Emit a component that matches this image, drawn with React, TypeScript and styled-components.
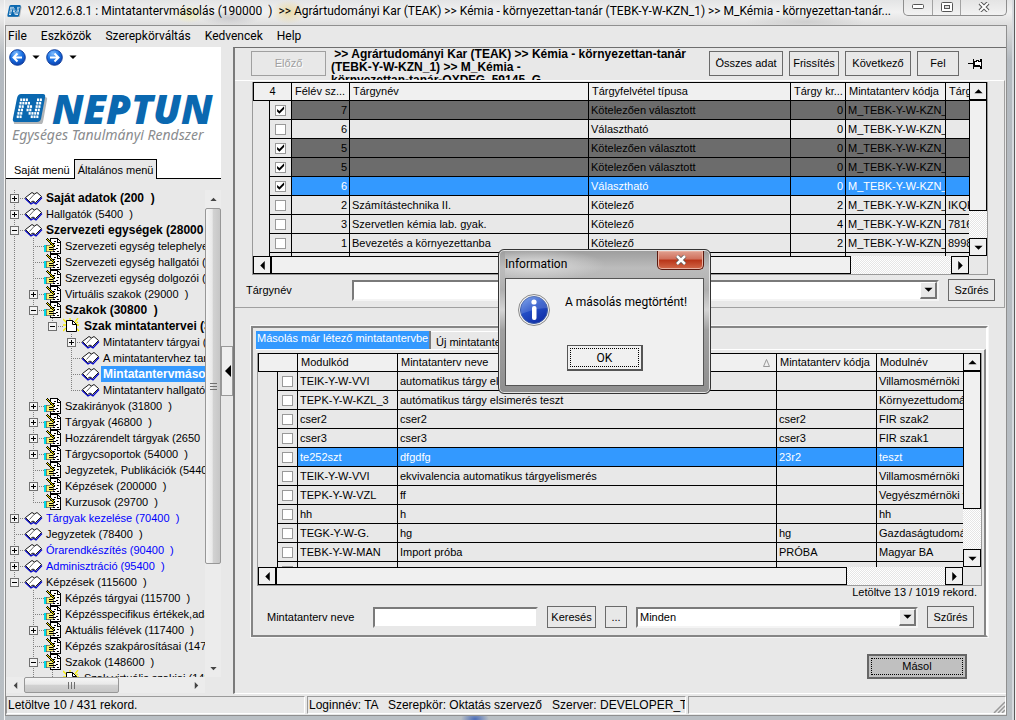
import React from "react";
import styled, { createGlobalStyle, css } from "styled-components";

const ui = `"Liberation Sans", Arial, sans-serif`;
const chrome = `Roboto, "Liberation Sans", sans-serif`;
const brand = `"Open Sans", "Noto Sans", sans-serif`;
const face = "#e8e8e8";
const blue = "#3399ff";

const Global = createGlobalStyle`
  *, *::before, *::after { box-sizing: border-box; }
  body { margin: 0; font: 11px/13px ${ui}; color: #000; }
  button, input, select { font: inherit; color: inherit; margin: 0; border-radius: 0; }
  svg { flex: none; }
`;

/* ---------- window frame ---------- */

const Frame = styled.div`
  position: relative;
  display: flex;
  flex-direction: column;
  min-height: 100vh;
  padding: 0 9px 4px 5px;
  overflow: hidden;
  background:
    linear-gradient(90deg, transparent 0 4px, #f4f4f4 4px 5px, transparent 5px),
    linear-gradient(270deg, #f0f0f0 0 1px, #5c5c5c 1px 2px, #d6dade 2px 4px, transparent 4px),
    radial-gradient(ellipse 14px 8px at 475px 719px, #4a6cb8, transparent),
    linear-gradient(180deg, #e3e4e5 0, #f1f1f1 12px, #dcdcdc 26px, #b4bac0 60px, #b9bfc4 100%);
`;

const TitleBar = styled.header`
  display: flex;
  align-items: center;
  gap: 6px;
  height: 25px;
  padding: 0 0 3px 2px;
  background:
    radial-gradient(ellipse 16px 9px at 184px 14px, #efeab0, transparent),
    radial-gradient(ellipse 18px 12px at 284px 12px, #ead9a4, transparent),
    radial-gradient(ellipse 30px 8px at 225px 18px, #c9c9cc, transparent),
    radial-gradient(ellipse 60px 8px at 800px 22px, #cfcfcf, transparent);
`;

const Title = styled.h1`
  flex: 1;
  min-width: 0;
  margin: 0;
  overflow: hidden;
  white-space: pre;
  text-overflow: ellipsis;
  font: 400 12px/16px ${chrome};
`;

const Caption = styled.div`
  display: flex;
  align-self: flex-start;
  border: 1px solid #8e8e8e;
  border-top: 0;
  border-radius: 0 0 5px 5px;
  background: linear-gradient(#e4e4e4, #f2f2f2);
`;

const CaptionButton = styled.button<{ $w: number }>`
  display: grid;
  place-items: center;
  width: ${(p) => p.$w}px;
  height: 15px;
  padding: 0 0 2px;
  border: 0;
  background: none;
  & + & { border-left: 1px solid #a2a2a2; }
`;

const Client = styled.div`
  flex: 1;
  display: flex;
  flex-direction: column;
  border: 1px solid #8f8f8f;
  background: ${face};
`;

const MenuBar = styled.nav`
  display: flex;
  gap: 14px;
  height: 21px;
  padding: 1px 2px 0;
  font: 12px/18px ${chrome};
`;

const MenuItem = styled.a`
  color: inherit;
  text-decoration: none;
`;

const Main = styled.div`
  flex: 1;
  display: flex;
`;

/* ---------- left side ---------- */

const Side = styled.aside`
  display: flex;
  flex-direction: column;
  width: 215px;
  flex: none;
`;

const Brand = styled.div`
  height: 112px;
  padding: 1px 3px 0;
  background: #fff;
`;

const NavRow = styled.div`
  display: flex;
  align-items: center;
  gap: 6px;
  height: 18px;
`;

const RoundButton = styled.button`
  display: flex;
  padding: 0;
  border: 0;
  background: none;
`;

const LogoRow = styled.div`
  display: flex;
  align-items: center;
  gap: 4px;
  height: 36px;
  padding: 0 3px;
  margin-top: 25px;
`;

const LogoText = styled.span`
  font: italic 800 40px/36px ${brand};
  color: #0a68b0;
`;

const Slogan = styled.p`
  margin: 0 0 0 3px;
  font: italic 14px/16px "Noto Sans", sans-serif;
  color: #8a8c8e;
  white-space: nowrap;
`;

const SideTabs = styled.div`
  display: flex;
  height: 20px;
  background: #fff;
  border-bottom: 1px solid #000;
`;

const SideTab = styled.button<{ $on?: boolean }>`
  height: 20px;
  padding: 2px 3px 0;
  border: 1px solid transparent;
  border-bottom: 0;
  background: none;
  white-space: nowrap;
  &:first-child { margin-left: 4px; }
  ${(p) => p.$on && css`
    border-color: #000;
    background: ${face};
  `}
`;

const TreeArea = styled.div`
  flex: 1;
  display: grid;
  grid-template-columns: minmax(0, 1fr) 16px;
  grid-template-rows: 487px 16px;
  padding-top: 11px;
`;

const TreeList = styled.ul`
  margin: 0;
  padding: 0;
  overflow: hidden;
  list-style: none;
`;

const TreeRow = styled.li`
  display: flex;
  height: 16px;
  white-space: pre;
`;

const Node = styled.span<{ $bold?: boolean; $link?: boolean; $sel?: boolean }>`
  flex: 1 0 auto;
  padding-left: 2px;
  font-size: ${(p) => (p.$bold ? 12 : 11)}px;
  line-height: 16px;
  font-weight: ${(p) => (p.$bold ? 700 : 400)};
  color: ${(p) => (p.$sel ? "#fff" : p.$link ? "#0000ff" : "#000")};
  background: ${(p) => (p.$sel ? blue : "none")};
`;

const SoftBar = styled.div<{ $h?: boolean }>`
  display: flex;
  flex-direction: ${(p) => (p.$h ? "row" : "column")};
  align-items: stretch;
  background: #ececec;
`;

const SoftThumb = styled.div<{ $size: number; $h?: boolean }>`
  display: grid;
  place-items: center;
  flex: 0 0 ${(p) => p.$size}px;
  border: 1px solid #979797;
  border-radius: 2px;
  background: linear-gradient(${(p) => (p.$h ? "180deg" : "90deg")}, #f5f5f5, #e9e9e9 45%, #d2d2d2 50%, #c6c6c6);
`;

const SoftEnd = styled.div<{ $push?: "right" | "down" }>`
  display: grid;
  place-items: center;
  flex: 0 0 18px;
  margin-left: ${(p) => (p.$push === "right" ? "auto" : 0)};
  margin-top: ${(p) => (p.$push === "down" ? "auto" : 0)};
`;

const Splitter = styled.div`
  display: flex;
  flex: 0 0 12px;
  align-items: center;
`;

const SplitButton = styled.button`
  display: grid;
  place-items: center;
  width: 12px;
  height: 50px;
  padding: 0;
  border: 1px solid #999;
  background: #efefef;
`;

/* ---------- right side ---------- */

const Content = styled.main`
  flex: 1;
  min-width: 0;
  border-top: 1px solid #6e6e6e;
  border-left: 2px solid #7a7a7a;
  border-bottom: 1px solid #fff;
`;

const HeadBar = styled.div`
  display: flex;
  align-items: flex-start;
  gap: 6px;
  height: 32px;
  padding: 3px 21px 0 16px;
`;

const Crumb = styled.p`
  flex: 1;
  min-width: 0;
  height: 32px;
  margin: -3px 15px 0 -1px;
  overflow: hidden;
  white-space: pre;
  font: 700 12px/13px ${ui};
`;

const Button = styled.button<{ $w: number; $h?: number }>`
  flex: none;
  width: ${(p) => p.$w}px;
  height: ${(p) => p.$h ?? 22}px;
  padding: 0;
  border: 1px solid #6a6a6a;
  background: ${face};
  white-space: nowrap;
  &:disabled { color: #a0a0a0; border-color: #a0a0a0; text-shadow: 1px 1px #fff; }
`;

const PinButton = styled.button`
  display: grid;
  place-items: center;
  width: 20px;
  height: 25px;
  padding: 0;
  border: 0;
  background: none;
`;

const UpperPanel = styled.section`
  margin-right: 1px;
  padding: 1px 9px 6px 11px;
  border-top: 1px solid #fff;
  border-right: 1px solid #a0a0a0;
  border-bottom: 1px solid #a0a0a0;
`;

const UpperInset = styled.div`
  padding: 0 7px 0 6px;
`;

const GridBox = styled.div<{ $rows: number }>`
  display: grid;
  grid-template-columns: minmax(0, 1fr) 18px;
  grid-template-rows: ${(p) => p.$rows}px 18px;
  border: 1px solid #9a9a9a;
  border-top: 0;
`;

const TableWrap = styled.div`
  overflow: hidden;
`;

const Table = styled.table`
  width: 100%;
  table-layout: fixed;
  border-collapse: separate;
  border-spacing: 0;
`;

const Th = styled.th`
  position: relative;
  height: 19px;
  padding: 0 3px;
  overflow: hidden;
  border: solid #000;
  border-width: 1px 1px 1px 0;
  background: #f0f0f0;
  font-weight: 400;
  text-align: left;
  white-space: nowrap;
  &:first-child { border-left-width: 1px; text-align: center; }
  &:last-child { border-right: 0; }
`;

const Td = styled.td<{ $num?: boolean }>`
  height: 19px;
  padding: 0 2px;
  overflow: hidden;
  border: solid #000;
  border-width: 0 1px 1px 0;
  text-align: ${(p) => (p.$num ? "right" : "left")};
  white-space: nowrap;
  &:last-child { border-right: 0; }
`;

const Gutter = styled.td`
  padding: 0;
  border-right: 1px solid #000;
`;

const CheckCell = styled.td`
  padding: 0;
  border: solid #000;
  border-width: 0 1px 1px 0;
  text-align: center;
  line-height: 0;
`;

const Row = styled.tr<{ $tone?: "dark" | "sel" }>`
  ${Td} {
    background: ${(p) => (p.$tone === "dark" ? "#6c6c6c" : p.$tone === "sel" ? blue : "none")};
    color: ${(p) => (p.$tone === "sel" ? "#fff" : "#000")};
  }
`;

const Check = styled.input.attrs({ type: "checkbox" })`
  appearance: none;
  width: 11px;
  height: 11px;
  vertical-align: top;
  border: 1px solid #999;
  background: #fff;
  &:checked::before {
    content: "";
    display: block;
    width: 9px;
    height: 9px;
    background: #000;
    clip-path: polygon(12% 38%, 38% 60%, 90% 8%, 90% 38%, 38% 92%, 12% 68%);
  }
`;

const SortMark = styled.span`
  position: absolute;
  right: 6px;
  top: 5px;
  display: flex;
`;

const ClassicBar = styled.div<{ $h?: boolean }>`
  display: flex;
  flex-direction: ${(p) => (p.$h ? "row" : "column")};
  background: repeating-conic-gradient(#fff 0 25%, #e6e6e6 0 50%) 0 0 / 2px 2px;
`;

const ClassicEnd = styled.button`
  display: grid;
  place-items: center;
  flex: 0 0 18px;
  padding: 0;
  border: 1px solid #000;
  background: #f0f0f0;
`;

const ClassicThumb = styled.div<{ $size: string; $h?: boolean }>`
  flex: 0 0 ${(p) => p.$size};
  border: 1px solid #000;
  margin-right: ${(p) => (p.$h ? "auto" : 0)};
  margin-bottom: ${(p) => (p.$h ? 0 : "auto")};
  background: #f0f0f0;
`;

const Field = styled.div<{ $top: number; $pad: string }>`
  display: flex;
  align-items: center;
  gap: 9px;
  margin-top: ${(p) => p.$top}px;
  padding: ${(p) => p.$pad};
`;

const Label = styled.label`
  width: 97px;
  flex: none;
`;

const TextBox = styled.input`
  width: 165px;
  height: 21px;
  padding: 0 3px;
  border: 2px solid;
  border-color: #7a7a7a #e8e8e8 #e8e8e8 #7a7a7a;
  background: #fff;
`;

const Combo = styled.div`
  position: relative;
  flex: 1;
  height: 21px;
`;

const Select = styled.select`
  appearance: none;
  width: 100%;
  height: 21px;
  padding: 0 20px 0 2px;
  border: 2px solid;
  border-color: #7a7a7a #f4f4f4 #f4f4f4 #7a7a7a;
  background: #fff;
`;

const ComboArrow = styled.span`
  position: absolute;
  top: 2px;
  right: 2px;
  display: grid;
  place-items: center;
  width: 17px;
  height: 17px;
  border: solid;
  border-width: 1px 2px 2px 1px;
  border-color: #fff #777 #777 #fff;
  background: ${face};
  pointer-events: none;
`;

const Group = styled.section`
  margin: 18px 18px 0 16px;
  height: 311px;
  padding: 3px 0 0 3px;
  border: 2px solid;
  border-color: #858585 #fff #858585 #858585;
  outline: 1px solid #f6f6f6;
`;

const Tabs = styled.div`
  display: flex;
  height: 18px;
`;

const Tab = styled.button<{ $on?: boolean }>`
  width: 175px;
  padding: 0 0 3px 1px;
  border: 0;
  border-right: 2px solid #7c7c7c;
  background: ${(p) => (p.$on ? blue : face)};
  color: ${(p) => (p.$on ? "#fff" : "#000")};
  text-align: left;
  white-space: nowrap;
  & + & { padding: 3px 0 0 5px; border-top: 1px solid #fff; }
`;

const Page = styled.div`
  height: 286px;
  padding: 3px 2px 0 1px;
  border-top: 1px solid #fff;
  border-right: 2px solid #858585;
`;

const Count = styled.p`
  margin: 0 5px 0 0;
  text-align: right;
`;

const Submit = styled.button`
  display: grid;
  width: 100px;
  height: 25px;
  margin: 17px 39px 0 auto;
  padding: 2px;
  border: 2px solid #666;
  background: #c0c0c0;
`;

const Focus = styled.span`
  display: grid;
  place-items: center;
  border: 1px dotted #000;
`;

const StatusBar = styled.footer`
  display: grid;
  grid-template-columns: 299px 379px minmax(0, 1fr);
  gap: 2px;
  padding: 2px 0 1px;
`;

const StatusCell = styled.div`
  display: flex;
  align-items: flex-end;
  justify-content: space-between;
  height: 18px;
  padding-left: 1px;
  overflow: hidden;
  border: solid;
  border-width: 1px;
  border-color: #9a9a9a #fff #fff #9a9a9a;
  font: 12px/16px ${ui};
  white-space: pre;
`;

/* ---------- message box ---------- */

const Dialog = styled.div`
  position: absolute;
  left: 498px;
  top: 249px;
  width: 213px;
  padding: 0 6px 7px;
  border: 1px solid #333;
  border-radius: 6px;
  background: linear-gradient(180deg, #9c9c9c, #bcbcbc 18px, #b0b0b0 40px, #d4d4d4 60px, #a0a0a0 80px, #8f8f8f);
  box-shadow: inset 0 0 0 1px #e4e4e4;
  font: 12px/16px ${chrome};
`;

const DialogHead = styled.div`
  display: flex;
  justify-content: space-between;
  height: 28px;
  background: radial-gradient(ellipse 70px 16px at 30px 15px, #dcdcdc, transparent);
`;

const DialogTitle = styled.h2`
  margin: 6px 0 0;
  font: inherit;
`;

const DialogClose = styled.button`
  display: grid;
  place-items: center;
  width: 47px;
  height: 19px;
  margin-top: 1px;
  padding: 0;
  border: 1px solid #5a1a10;
  border-top: 0;
  border-radius: 0 0 5px 5px;
  background: linear-gradient(#e0a090, #d0705c 45%, #b83418 50%, #d2694a);
  box-shadow: inset 0 0 0 1px #e8b0a0;
`;

const DialogBody = styled.div`
  display: grid;
  grid-template-columns: 32px 1fr;
  column-gap: 15px;
  padding: 15px 12px 14px;
  border: 1px solid #555;
  background: #f0f0f0;
`;

const Message = styled.p`
  margin: 0;
  white-space: nowrap;
`;

const OkButton = styled.button`
  display: grid;
  grid-column: 1 / -1;
  width: 76px;
  height: 26px;
  margin: 19px 0 0 49px;
  padding: 2px;
  border: 1px solid #555;
  border-right-width: 2px;
  border-bottom-width: 2px;
  background: #f0f0f0;
`;

/* ---------- drawings ---------- */

type Dir = "up" | "down" | "left" | "right";
const arrowPath: Record<Dir, string> = {
  up: "M0 6L4.500 1.500L9 6Z",
  down: "M0 2H9L4.500 6.500Z",
  left: "M2 4L7 -1V9Z",
  right: "M7 4L2 -1V9Z",
};
const Arrow = ({ dir, size = 9, fill = "#000" }: { dir: Dir; size?: number; fill?: string }) => (
  <svg width={size} height={size} viewBox="0 -1 9 10" fill={fill} aria-hidden>
    <path d={arrowPath[dir]} />
  </svg>
);

// lit cells of the dotted mark on the blue tile
const cells = ["111...11", "1111..11", "11.11.11", "11.11.11", "11..1111", "11...111"];
const NeptunMark = ({ size }: { size: number }) => (
  <svg width={size} height={size * 0.86} viewBox="0 0 36 31" aria-hidden>
    <path d="M10 3H33Q36 3 35 6L31 28Q30 31 27 31H5Q1 31 2 27L6 6Q7 3 10 3Z" fill="#b3b6b8" />
    <path d="M9 0H31Q34 0 33 4L29 25Q28 28 25 28H3Q0 28 1 24L5 4Q6 0 9 0Z" fill="#0a68b0" />
    {cells.flatMap((line, r) =>
      [...line].map((c, k) =>
        c === "1" ? (
          <rect key={`${r}-${k}`} x={8.2 - r * 0.7 + k * 2.8} y={4.5 + r * 3.4} width="2.100" height="2.600" fill="#fff" />
        ) : null
      )
    )}
  </svg>
);

const Globe = ({ back, id }: { back?: boolean; id: string }) => (
  <svg width="17" height="17" viewBox="0 0 17 17" aria-hidden>
    <defs>
      <radialGradient id={id} cx="0.4" cy="0.25" r="0.8">
        <stop offset="0" stopColor="#7fbcff" />
        <stop offset="0.5" stopColor="#1a72e4" />
        <stop offset="1" stopColor="#0a3aa8" />
      </radialGradient>
    </defs>
    <circle cx="8.500" cy="8.500" r="7.800" fill={`url(#${id})`} stroke="#123f9c" />
    <path
      d={back ? "M13 8.500H5M8.500 4.500L4.500 8.500L8.500 12.500" : "M4 8.500H12M8.500 4.500L12.500 8.500L8.500 12.500"}
      fill="none" stroke="#fff" strokeWidth="2"
    />
  </svg>
);

const Book = () => (
  <svg width="19" height="16" viewBox="0 0 19 16" aria-hidden>
    <path d="M0 8.500L6 14L8.500 12.500L11 14L17 7.500" fill="none" stroke="#0000c8" strokeWidth="1.200" />
    <path d="M0.500 7.500L7 2.500L9.500 4L12 2.500L16.500 6.500L10.500 12.500L8 11L5.500 12.500Z" fill="#fff" stroke="#000" strokeWidth="0.900" />
    <path d="M9.500 4L4.500 9.500" stroke="#222" strokeWidth="0.700" />
  </svg>
);

const Notes = () => (
  <svg width="19" height="16" viewBox="0 0 19 16" aria-hidden shapeRendering="crispEdges">
    <path d="M6.500 0.500H13.500L16.500 3.500V15.500H6.500Z" fill="#fff" stroke="#000" />
    <path d="M13 1V4H16" fill="none" stroke="#000" />
    <path d="M9 5H11M13 7H15M12 10H14M9 13H11M13 13H15M10 3H12" stroke="#000" />
    <path d="M2 7H6L8 6L10 8L9 13H4L2 14Z" fill="#f8f070" stroke="#555" strokeWidth="0.700" />
    <path d="M0 7H2V14H0Z" fill="#00d8e8" />
    <path d="M3 1L11 9" stroke="#000" strokeWidth="2" />
    <path d="M3 1L10 8" stroke="#f8e800" strokeWidth="1" />
    <path d="M5 9H9M5 11H12" stroke="#000" />
  </svg>
);

const NewPage = () => (
  <svg width="19" height="16" viewBox="0 0 19 16" aria-hidden>
    <path d="M0 1L4 5M15 0L12 4M0 13L3 10M13 10L16 13M7 0V2M0 7H3M13 7H16M15 4L12 6" stroke="#f8f000" strokeWidth="1.300" />
    <path d="M3.500 2.500H9.500L13.500 6.500V13.500H3.500Z" fill="#fff" stroke="#000" />
    <path d="M9.500 2.500V6.500H13.500" fill="none" stroke="#000" />
  </svg>
);

const Guide = ({ kind, box }: { kind: "pass" | "tee" | "end" | "gap"; box?: "+" | "-" }) => (
  <svg width="19" height="16" viewBox="0 0 19 16" aria-hidden shapeRendering="crispEdges">
    {kind !== "gap" && (
      <path d={kind === "end" ? "M8.500 0V8" : "M8.500 0V16"} stroke="#808080" strokeDasharray="1 1" />
    )}
    {(kind === "tee" || kind === "end") && <path d="M8 8.500H19" stroke="#808080" strokeDasharray="1 1" />}
    {box && (
      <>
        <rect x="4.500" y="4.500" width="8" height="8" fill="#f4f4f4" stroke="#707070" />
        <path d={box === "+" ? "M6 8.500H11M8.500 6V11" : "M6 8.500H11"} stroke="#000" />
      </>
    )}
  </svg>
);

const Grip = ({ h }: { h?: boolean }) => (
  <svg width="9" height="9" viewBox="0 0 9 9" aria-hidden shapeRendering="crispEdges">
    <path d={h ? "M1.500 1V8M4.500 1V8M7.500 1V8" : "M1 1.500H8M1 4.500H8M1 7.500H8"} stroke="#707070" />
  </svg>
);

const Pin = () => (
  <svg width="15" height="12" viewBox="0 0 15 12" aria-hidden shapeRendering="crispEdges">
    <path d="M0 5.500H5M5.500 1V11" stroke="#000" />
    <path d="M6 3.500H8V2.500H10V3.500H12V1.500H13.500V10.500H12V8.500H6Z" fill="#fff" stroke="#000" />
    <path d="M6 7.500H12" stroke="#000" strokeWidth="2" />
  </svg>
);

const InfoIcon = () => (
  <svg width="32" height="32" viewBox="0 0 32 32" aria-hidden>
    <defs>
      <linearGradient id="info" x1="0" y1="0" x2="0.6" y2="1">
        <stop offset="0" stopColor="#6f9bea" />
        <stop offset="0.5" stopColor="#2450c8" />
        <stop offset="1" stopColor="#1230a8" />
      </linearGradient>
    </defs>
    <circle cx="16" cy="16" r="15.500" fill="#f2f2f2" stroke="#8a8a8a" />
    <circle cx="16" cy="16" r="13.500" fill="url(#info)" stroke="#3a5aa8" />
    <path d="M3 16A13 13 0 0 1 29 14Q18 14 3 20Z" fill="#fff" opacity="0.15" />
    <circle cx="16" cy="8" r="2.600" fill="#fff" />
    <rect x="14" y="12" width="4.500" height="14" rx="2" fill="#fff" />
  </svg>
);

/* ---------- data ---------- */

type Icon = "book" | "notes" | "page";
type TreeItem = [guides: string, box: "" | "+" | "-", icon: Icon, text: string, flag?: "bold" | "link" | "sel"];

// guides: "|" passing line, "t" branch, "l" last branch, "." empty
const tree: TreeItem[] = [
  ["t", "+", "book", "Saját adatok (200  )", "bold"],
  ["t", "+", "book", "Hallgatók (5400  )"],
  ["t", "-", "book", "Szervezeti egységek (28000  )", "bold"],
  ["|t", "", "notes", "Szervezeti egység telephelyei"],
  ["|t", "", "notes", "Szervezeti egység hallgatói (28200  )"],
  ["|t", "", "notes", "Szervezeti egység dolgozói (28400  )"],
  ["|t", "+", "notes", "Virtuális szakok (29000  )"],
  ["|t", "-", "notes", "Szakok (30800  )", "bold"],
  ["||l", "-", "page", "Szak mintatantervei (31000  )", "bold"],
  ["||.t", "+", "book", "Mintatanterv tárgyai (31200  )"],
  ["||.t", "", "book", "A mintatantervhez tartozó"],
  ["||.t", "", "book", "Mintatantervmásolás", "sel"],
  ["||.l", "", "book", "Mintatanterv hallgatói"],
  ["|t", "+", "notes", "Szakirányok (31800  )"],
  ["|t", "+", "notes", "Tárgyak (46800  )"],
  ["|t", "+", "notes", "Hozzárendelt tárgyak (2650  )"],
  ["|t", "+", "notes", "Tárgycsoportok (54000  )"],
  ["|t", "", "notes", "Jegyzetek, Publikációk (54400  )"],
  ["|t", "+", "notes", "Képzések (200000  )"],
  ["|l", "", "notes", "Kurzusok (29700  )"],
  ["t", "+", "book", "Tárgyak kezelése (70400  )", "link"],
  ["t", "", "book", "Jegyzetek (78400  )"],
  ["t", "+", "book", "Órarendkészítés (90400  )", "link"],
  ["t", "+", "book", "Adminisztráció (95400  )", "link"],
  ["l", "-", "book", "Képzések (115600  )"],
  [".t", "", "notes", "Képzés tárgyai (115700  )"],
  [".t", "", "notes", "Képzésspecifikus értékek,adatok"],
  [".t", "+", "notes", "Aktuális félévek (117400  )"],
  [".t", "", "notes", "Képzés szakpárosításai (147100  )"],
  [".t", "-", "notes", "Szakok (148600  )"],
  [".|t", "", "page", "Szak virtuális szakjai (148800  )"],
];

const guideKind = { "|": "pass", t: "tee", l: "end", ".": "gap" } as const;
const icons = { book: Book, notes: Notes, page: NewPage };

const subjects: [boolean, "dark" | "sel" | undefined, ...string[]][] = [
  [true, "dark", "7", "", "Kötelezően választott", "0", ""],
  [false, undefined, "6", "", "Választható", "0", ""],
  [true, "dark", "5", "", "Kötelezően választott", "0", ""],
  [true, "dark", "5", "", "Kötelezően választott", "0", ""],
  [true, "sel", "6", "", "Választható", "0", ""],
  [false, undefined, "2", "Számítástechnika II.", "Kötelező", "2", "IKQK"],
  [false, undefined, "3", "Szervetlen kémia lab. gyak.", "Kötelező", "4", "7816"],
  [false, undefined, "1", "Bevezetés a környezettanba", "Kötelező", "2", "8998"],
  [false, undefined, "", "", "", "", ""],
];

const plans: string[][] = [
  ["TEIK-Y-W-VVI", "automatikus tárgy elismerés", "", "Villamosmérnöki"],
  ["TEPK-Y-W-KZL_3", "autómatikus tárgy elsimerés teszt", "", "Környezettudományi"],
  ["cser2", "cser2", "cser2", "FIR szak2"],
  ["cser3", "cser3", "cser3", "FIR szak1"],
  ["te252szt", "dfgdfg", "23r2", "teszt"],
  ["TEIK-Y-W-VVI", "ekvivalencia automatikus tárgyelismerés", "", "Villamosmérnöki"],
  ["TEPK-Y-W-VZL", "ff", "", "Vegyészmérnöki tudományi"],
  ["hh", "h", "", "hh"],
  ["TEGK-Y-W-G.", "hg", "hg", "Gazdaságtudományi"],
  ["TEBK-Y-W-MAN", "Import próba", "PRÓBA", "Magyar BA"],
  ["TEBK-Y-W-APP", "Magyar BBK/Ver 64924. C", "M_TEBK-Y-W-APP", ""],
];

/* ---------- parts ---------- */

const ClassicScroll = ({ h, size }: { h?: boolean; size: string }) => (
  <ClassicBar $h={h}>
    <ClassicEnd aria-label={h ? "Balra" : "Fel"}><Arrow dir={h ? "left" : "up"} /></ClassicEnd>
    <ClassicThumb $h={h} $size={size} />
    <ClassicEnd aria-label={h ? "Jobbra" : "Le"}><Arrow dir={h ? "right" : "down"} /></ClassicEnd>
  </ClassicBar>
);

const Tree = () => (
  <TreeArea>
    <TreeList>
      {tree.map(([guides, box, icon, text, flag], i) => {
        const Glyph = icons[icon];
        return (
          <TreeRow key={i}>
            {[...guides].map((g, k) => (
              <Guide
                key={k}
                kind={guideKind[g as keyof typeof guideKind]}
                box={k === guides.length - 1 && box ? box : undefined}
              />
            ))}
            <Glyph />
            <Node $bold={flag === "bold" || flag === "sel"} $link={flag === "link"} $sel={flag === "sel"}>{text}</Node>
          </TreeRow>
        );
      })}
    </TreeList>
    <SoftBar>
      <SoftEnd><Arrow dir="up" size={7} fill="#444" /></SoftEnd>
      <SoftThumb $size={356}><Grip /></SoftThumb>
      <SoftEnd $push="down"><Arrow dir="down" size={7} fill="#444" /></SoftEnd>
    </SoftBar>
    <SoftBar $h>
      <SoftEnd><Arrow dir="left" size={7} fill="#444" /></SoftEnd>
      <SoftThumb $h $size={95}><Grip h /></SoftThumb>
      <SoftEnd $push="right"><Arrow dir="right" size={7} fill="#444" /></SoftEnd>
    </SoftBar>
  </TreeArea>
);

const SubjectGrid = () => (
  <GridBox $rows={174}>
    <TableWrap>
      <Table>
        <colgroup>
          <col width="17" /><col width="22" /><col width="58" /><col /><col width="202" />
          <col width="55" /><col width="100" /><col width="23" />
        </colgroup>
        <thead>
          <tr>
            <Th colSpan={2}>4</Th>
            <Th>Félév sz...</Th><Th>Tárgynév</Th><Th>Tárgyfelvétel típusa</Th>
            <Th>Tárgy kr...</Th><Th>Mintatanterv kódja</Th><Th>Tárgykód</Th>
          </tr>
        </thead>
        <tbody>
          {subjects.map(([on, tone, term, name, type, credit, code], i) => (
            <Row key={i} $tone={tone}>
              <Gutter />
              <CheckCell>{type && <Check defaultChecked={on} aria-label={`Sor ${i + 1}`} />}</CheckCell>
              <Td $num>{term}</Td><Td>{name}</Td><Td>{type}</Td><Td $num>{credit}</Td>
              <Td>{type && "M_TEBK-Y-W-KZN_"}</Td><Td>{code}</Td>
            </Row>
          ))}
        </tbody>
      </Table>
    </TableWrap>
    <ClassicScroll size="111px" />
    <ClassicScroll h size="81%" />
  </GridBox>
);

const PlanGrid = () => (
  <GridBox $rows={214}>
    <TableWrap>
      <Table>
        <colgroup>
          <col width="20" /><col width="20" /><col width="100" /><col /><col width="100" /><col width="86" />
        </colgroup>
        <thead>
          <tr>
            <Th colSpan={2} aria-label="Kijelölés" />
            <Th>Modulkód</Th>
            <Th>
              Mintatanterv neve
              <SortMark>
                <svg width="7" height="8" viewBox="0 0 7 8" aria-hidden>
                  <path d="M0.500 7.500L3.500 0.500L6.500 7.500Z" fill="none" stroke="#999" />
                </svg>
              </SortMark>
            </Th>
            <Th>Mintatanterv kódja</Th><Th>Modulnév</Th>
          </tr>
        </thead>
        <tbody>
          {plans.map((row, i) => (
            <Row key={i} $tone={i === 4 ? "sel" : undefined}>
              <Gutter />
              <CheckCell><Check aria-label={`Terv ${i + 1}`} /></CheckCell>
              {row.map((c, k) => <Td key={k}>{c}</Td>)}
            </Row>
          ))}
        </tbody>
      </Table>
    </TableWrap>
    <ClassicScroll size="138px" />
    <ClassicScroll h size="81%" />
  </GridBox>
);

export default function App() {
  return (
    <>
      <Global />
      <Frame>
        <TitleBar>
          <NeptunMark size={15} />
          <Title>{"V2012.6.8.1 : Mintatantervmásolás (190000  )  >> Agrártudományi Kar (TEAK) >> Kémia - környezettan-tanár (TEBK-Y-W-KZN_1) >> M_Kémia - környezettan-tanár..."}</Title>
          <Caption>
            <CaptionButton $w={28} aria-label="Kis méret">
              <svg width="12" height="5"><rect x="0.500" y="0.500" width="11" height="4" rx="1" fill="#fff" stroke="#555" /></svg>
            </CaptionButton>
            <CaptionButton $w={28} aria-label="Teljes méret">
              <svg width="12" height="10"><rect x="0.500" y="0.500" width="11" height="9" rx="1" fill="#fff" stroke="#555" /><rect x="3.500" y="3.500" width="5" height="3" fill="#ddd" stroke="#555" /></svg>
            </CaptionButton>
            <CaptionButton $w={46} aria-label="Bezárás">
              <svg width="12" height="10" viewBox="0 0 12 10"><path d="M2 1L10 9M10 1L2 9" stroke="#555" strokeWidth="4" /><path d="M2 1L10 9M10 1L2 9" stroke="#fff" strokeWidth="2" /></svg>
            </CaptionButton>
          </Caption>
        </TitleBar>
        <Client>
          <MenuBar>
            {["File", "Eszközök", "Szerepkörváltás", "Kedvencek", "Help"].map((m) => (
              <MenuItem key={m} href="#">{m}</MenuItem>
            ))}
          </MenuBar>
          <Main>
            <Side>
              <Brand>
                <NavRow>
                  <RoundButton aria-label="Vissza"><Globe back id="globe-back" /></RoundButton>
                  <Arrow dir="down" size={8} />
                  <RoundButton aria-label="Előre"><Globe id="globe-next" /></RoundButton>
                  <Arrow dir="down" size={8} />
                </NavRow>
                <LogoRow>
                  <NeptunMark size={36} />
                  <LogoText>NEPTUN</LogoText>
                </LogoRow>
                <Slogan>Egységes Tanulmányi Rendszer</Slogan>
              </Brand>
              <SideTabs>
                <SideTab>Saját menü</SideTab>
                <SideTab $on>Általános menü</SideTab>
              </SideTabs>
              <Tree />
            </Side>
            <Splitter>
              <SplitButton aria-label="Menü elrejtése"><Arrow dir="left" size={12} /></SplitButton>
            </Splitter>
            <Content>
              <HeadBar>
                <Button $w={75} $h={25} disabled>Előző</Button>
                <Crumb>{" >> Agrártudományi Kar (TEAK) >> Kémia - környezettan-tanár\n(TEBK-Y-W-KZN_1) >> M_Kémia -\nkörnyezettan-tanár-OXDFG_59145_G"}</Crumb>
                <Button $w={74} $h={25}>Összes adat</Button>
                <Button $w={50} $h={25}>Frissítés</Button>
                <Button $w={66} $h={25}>Következő</Button>
                <Button $w={42} $h={25}>Fel</Button>
                <PinButton aria-label="Rögzítés"><Pin /></PinButton>
              </HeadBar>
              <UpperPanel>
                <UpperInset><SubjectGrid /></UpperInset>
                <Field $top={4} $pad="0">
                  <Label htmlFor="subject">Tárgynév</Label>
                  <Combo>
                    <Select id="subject" defaultValue=""><option value=""></option></Select>
                    <ComboArrow><Arrow dir="down" size={9} /></ComboArrow>
                  </Combo>
                  <Button $w={47}>Szűrés</Button>
                </Field>
              </UpperPanel>
              <Group>
                <Tabs>
                  <Tab $on>Másolás már létező mintatantervbe</Tab>
                  <Tab>Új mintatantervbe másolás</Tab>
                </Tabs>
                <Page>
                  <PlanGrid />
                  <Count>Letöltve 13 / 1019 rekord.</Count>
                  <Field $top={7} $pad="0 8px 0 10px">
                    <Label htmlFor="plan">Mintatanterv neve</Label>
                    <TextBox id="plan" />
                    <Button $w={49}>Keresés</Button>
                    <Button $w={22}>...</Button>
                    <Combo>
                      <Select aria-label="Szűrő" defaultValue="m"><option value="m">Minden</option></Select>
                      <ComboArrow><Arrow dir="down" size={9} /></ComboArrow>
                    </Combo>
                    <Button $w={47}>Szűrés</Button>
                  </Field>
                </Page>
              </Group>
              <Submit><Focus>Másol</Focus></Submit>
            </Content>
          </Main>
          <StatusBar>
            <StatusCell>Letöltve 10 / 431 rekord.</StatusCell>
            <StatusCell>{"Loginnév: TA   Szerepkör: Oktatás szervező   Szerver: DEVELOPER_TEST"}</StatusCell>
            <StatusCell>
              <span />
              <svg width="12" height="12" aria-hidden><path d="M1 12L12 1M5 12L12 5M9 12L12 9" stroke="#999" strokeWidth="1.500" /></svg>
            </StatusCell>
          </StatusBar>
        </Client>
        <Dialog role="dialog" aria-label="Information">
          <DialogHead>
            <DialogTitle>Information</DialogTitle>
            <DialogClose aria-label="Bezárás">
              <svg width="12" height="10" viewBox="0 0 12 10"><path d="M2 1L10 9M10 1L2 9" stroke="#555" strokeWidth="4" /><path d="M2 1L10 9M10 1L2 9" stroke="#fff" strokeWidth="2.500" /></svg>
            </DialogClose>
          </DialogHead>
          <DialogBody>
            <InfoIcon />
            <Message>A másolás megtörtént!</Message>
            <OkButton><Focus>OK</Focus></OkButton>
          </DialogBody>
        </Dialog>
      </Frame>
    </>
  );
}
